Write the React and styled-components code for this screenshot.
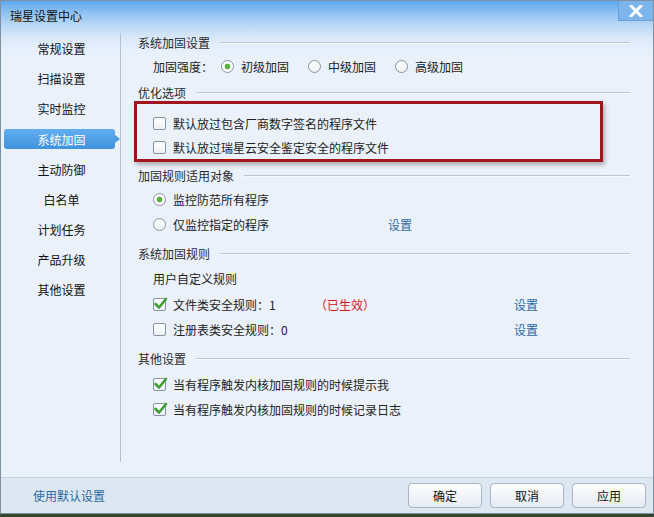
import React from "react";
import styled, { createGlobalStyle } from "styled-components";

const GlobalStyle = createGlobalStyle`
  html, body {
    margin: 0;
    padding: 0;
    background: #38442f;
  }
  body {
    font-family: "Noto Sans CJK SC", "Noto Sans", sans-serif;
    font-size: 12px;
    color: #222;
  }
`;

const navItems = [
  "常规设置",
  "扫描设置",
  "实时监控",
  "系统加固",
  "主动防御",
  "白名单",
  "计划任务",
  "产品升级",
  "其他设置",
];

export default function App() {
  return (
    <>
      <GlobalStyle />
      <Window>
        <TitleBar>
          <Title>瑞星设置中心</Title>
          <CloseButton>
            <svg width="14" height="12" viewBox="0 0 14 12">
              <path
                d="M2 1 L12 11 M12 1 L2 11"
                stroke="#fff"
                strokeWidth="3"
                strokeLinecap="square"
              />
            </svg>
          </CloseButton>
        </TitleBar>
        <Body>
          <Sidebar>
            {navItems.map((item) => (
              <NavItem key={item} active={item === "系统加固"}>
                <NavPill active={item === "系统加固"}>{item}</NavPill>
              </NavItem>
            ))}
          </Sidebar>
          <Content>
            <SectionHeader>系统加固设置</SectionHeader>
            <Row>
              <Label>加固强度：</Label>
              <Option>
                <Radio checked />
                初级加固
              </Option>
              <Option>
                <Radio />
                中级加固
              </Option>
              <Option>
                <Radio />
                高级加固
              </Option>
            </Row>

            <SectionHeader top={4} bottom={0}>
              优化选项
            </SectionHeader>
            <HighlightBox>
              <BoxRow>
                <Checkbox />
                默认放过包含厂商数字签名的程序文件
              </BoxRow>
              <BoxRow>
                <Checkbox />
                默认放过瑞星云安全鉴定安全的程序文件
              </BoxRow>
            </HighlightBox>

            <SectionHeader top={4}>加固规则适用对象</SectionHeader>
            <Row>
              <Radio checked />
              监控防范所有程序
            </Row>
            <Row>
              <Cell width={235}>
                <Radio />
                仅监控指定的程序
              </Cell>
              <Link>设置</Link>
            </Row>

            <SectionHeader top={7}>系统加固规则</SectionHeader>
            <SubLabel>用户自定义规则</SubLabel>
            <Row>
              <Cell width={162}>
                <Checkbox checked />
                文件类安全规则：1
              </Cell>
              <Cell width={199}>
                <Status>（已生效）</Status>
              </Cell>
              <Link>设置</Link>
            </Row>
            <Row>
              <Cell width={361}>
                <Checkbox />
                注册表类安全规则：0
              </Cell>
              <Link>设置</Link>
            </Row>

            <SectionHeader top={7} bottom={5}>
              其他设置
            </SectionHeader>
            <Row>
              <Checkbox checked />
              当有程序触发内核加固规则的时候提示我
            </Row>
            <Row>
              <Checkbox checked />
              当有程序触发内核加固规则的时候记录日志
            </Row>
          </Content>
        </Body>
        <Footer>
          <Link>使用默认设置</Link>
          <Buttons>
            <Button>确定</Button>
            <Button>取消</Button>
            <Button>应用</Button>
          </Buttons>
        </Footer>
      </Window>
    </>
  );
}

function Checkbox({ checked }) {
  return (
    <CheckBoxFrame>
      {checked && (
        <CheckMark width="15" height="14" viewBox="0 0 15 14">
          <path
            d="M2.5 7 L6 10.5 L13 2"
            fill="none"
            stroke="#3f9e2f"
            strokeWidth="2.6"
            strokeLinecap="round"
            strokeLinejoin="round"
          />
        </CheckMark>
      )}
    </CheckBoxFrame>
  );
}

function Radio({ checked }) {
  return <RadioFrame checked={checked} />;
}

const Window = styled.div`
  width: 654px;
  height: 514px;
  box-sizing: border-box;
  border: 1px solid #7d90a4;
  display: flex;
  flex-direction: column;
  background: linear-gradient(
    to bottom,
    #5ba8ef 0px,
    #8fc2f2 12px,
    #b9d8f6 24px,
    #d8e8f8 36px,
    #e6effa 48px,
    #eaf1fa 60px,
    #eaf1fa 100%
  );
`;

const TitleBar = styled.div`
  height: 32px;
  display: flex;
  align-items: flex-start;
`;

const Title = styled.div`
  padding: 6px 0 0 9px;
  font-size: 12px;
  line-height: 17px;
  color: #111;
`;

const CloseButton = styled.div`
  margin-left: auto;
  width: 35px;
  height: 20px;
  box-sizing: border-box;
  background: #7cb5ec;
  border-left: 1px solid #6a9fd6;
  border-bottom: 1px solid #6a9fd6;
  display: flex;
  align-items: center;
  justify-content: center;
`;

const Body = styled.div`
  flex: 1;
  display: flex;
  padding-bottom: 15px;
  min-height: 0;
`;

const Sidebar = styled.div`
  width: 119px;
  border-right: 1px solid #b3c1d0;
  display: flex;
  flex-direction: column;
`;

const NavItem = styled.div`
  height: 30px;
  display: flex;
  align-items: center;
  padding: ${({ active }) => (active ? "1px 0 0 3px" : "0 0 0 3px")};
`;

const NavPill = styled.div`
  position: relative;
  width: 111px;
  height: 20px;
  display: flex;
  align-items: center;
  justify-content: center;
  padding-left: 4px;
  box-sizing: border-box;
  border-radius: 3px;
  font-size: 12px;
  color: ${({ active }) => (active ? "#fff" : "#111")};
  background: ${({ active }) =>
    active ? "linear-gradient(to bottom, #63aef0, #3f92dc)" : "transparent"};

  &::after {
    content: "";
    display: ${({ active }) => (active ? "block" : "none")};
    position: absolute;
    right: -5px;
    top: 6px;
    border-left: 5px solid #4a9ae2;
    border-top: 4px solid transparent;
    border-bottom: 4px solid transparent;
  }
`;

const Content = styled.div`
  flex: 1;
  padding: 0 23px 0 17px;
  display: flex;
  flex-direction: column;
`;

const SectionHeader = styled.div`
  height: 18px;
  margin-top: ${({ top }) => top || 0}px;
  margin-bottom: ${({ bottom }) => (bottom === undefined ? 3 : bottom)}px;
  display: flex;
  align-items: center;
  gap: 10px;
  color: #2a2a2a;
  white-space: nowrap;

  &::after {
    content: "";
    flex: 1;
    height: 1px;
    background: #b9c6d4;
    box-shadow: 0 1px 0 #f6f9fd;
  }
`;

const Row = styled.div`
  height: 25px;
  display: flex;
  align-items: center;
  padding-left: 15px;
  white-space: nowrap;
`;

const SubLabel = styled(Row)`
  height: 27px;
`;

const Label = styled.span`
  margin-right: 8px;
`;

const Option = styled.span`
  display: flex;
  align-items: center;
  margin-right: 19px;
`;

const Cell = styled.span`
  display: flex;
  align-items: center;
  width: ${({ width }) => width}px;
`;

const HighlightBox = styled.div`
  margin-left: -4px;
  width: 469px;
  box-sizing: border-box;
  border: 3px solid #a3151d;
  padding: 7px 0 0 16px;
  height: 61px;
  box-shadow: 2px 3px 4px rgba(60, 60, 60, 0.35);
`;

const BoxRow = styled.div`
  height: 24px;
  display: flex;
  align-items: center;
  white-space: nowrap;
`;

const CheckBoxFrame = styled.span`
  position: relative;
  width: 13px;
  height: 13px;
  box-sizing: border-box;
  border: 1px solid #8593a2;
  border-radius: 2px;
  background: linear-gradient(to bottom, #ffffff, #eef2f6);
  margin-right: 7px;
  flex: none;
`;

const CheckMark = styled.svg`
  position: absolute;
  left: -1px;
  top: -2px;
`;

const RadioFrame = styled.span`
  width: 13px;
  height: 13px;
  box-sizing: border-box;
  border: 1px solid #8593a2;
  border-radius: 50%;
  background: ${({ checked }) =>
    checked
      ? "radial-gradient(circle, #56b33a 0 2.6px, #ffffff 3.2px)"
      : "linear-gradient(to bottom, #ffffff, #eef2f6)"};
  margin-right: 7px;
  flex: none;
`;

const Link = styled.span`
  color: #2a6a9f;
  cursor: pointer;
`;

const Status = styled.span`
  color: #d4171f;
`;

const Footer = styled.div`
  height: 36px;
  box-sizing: border-box;
  border-top: 1px solid #c6d3e0;
  background: #dde7f2;
  display: flex;
  align-items: flex-start;
  padding: 5px 7px 0 32px;

  & > ${Link} {
    line-height: 24px;
    margin-top: 1px;
  }
`;

const Buttons = styled.div`
  margin-left: auto;
  display: flex;
  gap: 8px;
`;

const Button = styled.button`
  width: 74px;
  height: 25px;
  border: 1px solid #a9b5c2;
  border-radius: 4px;
  background: linear-gradient(to bottom, #fdfeff, #e5ebf2);
  font-family: "Noto Sans CJK SC", "Noto Sans", sans-serif;
  font-size: 12px;
  color: #111;
  padding: 0;
`;
